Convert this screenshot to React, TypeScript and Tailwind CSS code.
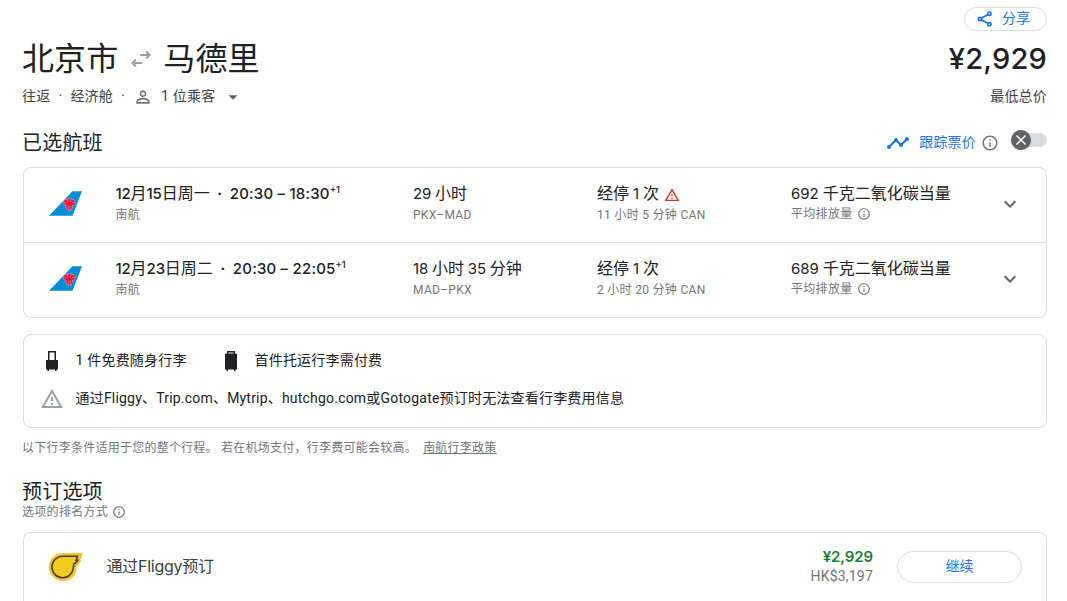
const latin = "font-['Inter','Noto_Sans_CJK_SC',sans-serif]";

type Leg = {
  date: string;
  times: string;
  duration: string;
  route: string;
  warn: boolean;
  layover: string;
  emissions: string;
};

const legs: Leg[] = [
  {
    date: "12月15日周一",
    times: "20:30 – 18:30",
    duration: "29 小时",
    route: "PKX–MAD",
    warn: true,
    layover: "11 小时 5 分钟 CAN",
    emissions: "692 千克二氧化碳当量",
  },
  {
    date: "12月23日周二",
    times: "20:30 – 22:05",
    duration: "18 小时 35 分钟",
    route: "MAD–PKX",
    warn: false,
    layover: "2 小时 20 分钟 CAN",
    emissions: "689 千克二氧化碳当量",
  },
];

// Sets the digits of a mixed string in the display face
const Mixed = ({ text, strong }: { text: string; strong?: boolean }) => (
  <>
    {text.split(/(\d+)/).map((part, i) =>
      /\d/.test(part) ? (
        <span
          key={i}
          className={`${latin} text-[15px] ${
            strong ? "font-medium tracking-[-.2px]" : ""
          }`}
        >
          {part}
        </span>
      ) : (
        part
      )
    )}
  </>
);

const InfoIcon = ({ className }: { className: string }) => (
  <svg viewBox="0 0 24 24" fill="currentColor" className={className}>
    <path d="M11 7h2v2h-2zm0 4h2v6h-2zm1-9C6.48 2 2 6.48 2 12s4.48 10 10 10 10-4.48 10-10S17.52 2 12 2zm0 18c-4.41 0-8-3.59-8-8s3.59-8 8-8 8 3.59 8 8-3.59 8-8 8z" />
  </svg>
);

const WarningIcon = ({ className }: { className: string }) => (
  <svg viewBox="0 0 24 24" fill="currentColor" className={className}>
    <path d="M12 5.99L19.53 19H4.47L12 5.99M12 2L1 21h22L12 2zm1 14h-2v2h2v-2zm0-6h-2v4h2v-4z" />
  </svg>
);

const AirlineLogo = () => (
  <svg viewBox="0 0 35 35" className="size-[35px]">
    <path d="M24.500 5.300H34L24.500 29.700H1z" fill="#008fd5" />
    <path
      d="M15.500 16c.2-2 1.500-2.800 3-2.500.6-1.500 4.900-1.500 5.500 0 1.500-.3 2.800.5 3 2.500.1 2-1 3.300-2.500 3.200.3 2.900-.6 5.300-3.250 5.300s-3.550-2.400-3.250-5.300c-1.500.1-2.600-1.200-2.500-3.200z"
      fill="#e8173f"
      stroke="#f0b4c2"
      strokeWidth=".5"
    />
    <path
      d="M19.800 13v3M22.700 13v3M16.500 16.500h2M24 16.500h2M20.300 19.500v4.500M22.300 19.500v4.500"
      stroke="#f3a7b6"
      strokeWidth=".5"
    />
  </svg>
);

const FlightRow = ({ leg }: { leg: Leg }) => (
  <div className="flex h-[75px] border-t border-[#dadce0] pl-6 first:h-[74px] first:border-t-0">
    <div className="w-[67.500px] shrink-0 pt-[18px]">
      <AirlineLogo />
    </div>
    <div className="w-[297.500px] shrink-0 pt-3.5">
      <div className="flex h-6 items-center whitespace-pre text-base">
        <span>
          <Mixed text={leg.date} strong />
        </span>
        <span className="w-5 text-center font-bold">·</span>
        <span className={`${latin} text-[15px] font-medium tracking-[.2px]`}>
          {leg.times}
        </span>
        <span className={`${latin} -mt-2 text-[9.500px] font-medium`}>+1</span>
      </div>
      <div className="pt-px text-xs leading-4 tracking-[.2px] text-[#70757a]">
        南航
      </div>
    </div>
    <div className="w-[184px] shrink-0 pt-3.5">
      <div className="text-base leading-6 tracking-[-.1px]">
        <Mixed text={leg.duration} />
      </div>
      <div className="pt-px text-xs leading-4 tracking-[.3px] text-[#70757a]">
        {leg.route}
      </div>
    </div>
    <div className="w-[194px] shrink-0 pt-3.5">
      <div className="flex h-6 items-center text-base">
        <span>
          <Mixed text="经停 1 次" />
        </span>
        {leg.warn && (
          <WarningIcon className="ml-[5px] mt-0.5 size-4 text-[#d93025]" />
        )}
      </div>
      <div className="pt-px text-xs leading-4 tracking-[.3px] text-[#70757a]">
        {leg.layover}
      </div>
    </div>
    <div className="grow pt-3.5">
      <div className="text-base leading-6">
        <Mixed text={leg.emissions} />
      </div>
      <div className="flex h-4 items-center text-xs tracking-[.3px] text-[#70757a]">
        平均排放量
        <InfoIcon className="ml-1 size-3.5" />
      </div>
    </div>
    <div className="w-12 shrink-0 pt-6">
      <svg viewBox="0 0 24 24" fill="#5f6368" className="size-6">
        <path d="M7.410 8.590L12 13.170l4.590-4.580L18 10l-6 6-6-6 1.410-1.410z" />
      </svg>
    </div>
  </div>
);

const App = () => {
  return (
    <main className="h-[601px] overflow-hidden bg-white pl-[23px] pr-5 font-['Roboto','Noto_Sans_CJK_SC',sans-serif] text-sm tracking-[.2px] text-[#202124]">
      <div className="flex h-[31px] justify-end pt-[7px]">
        <button className="flex h-6 w-[83px] items-center rounded-full border border-[#dadce0] pb-0.5 pl-3 text-[#1a73e8]">
          <svg
            viewBox="0 0 24 24"
            className="mr-[9px] mt-0.5 size-4"
            fill="none"
            stroke="currentColor"
            strokeWidth="2.500"
          >
            <path d="M7 10.500l9-5M7 13.500l9 5" />
            <circle cx="4.500" cy="12" r="2.500" />
            <circle cx="18.500" cy="4" r="2.500" />
            <circle cx="18.500" cy="20" r="2.500" />
          </svg>
          分享
        </button>
      </div>

      <header className="flex h-[94px] justify-between">
        <div>
          <h1 className="-ml-px flex h-14 items-center pt-0.5 text-[32px] tracking-[.1px]">
            北京市
            <svg
              viewBox="0 0 24 24"
              fill="#9aa0a6"
              className="ml-[11px] mr-2.5 -mt-0.5 size-6"
            >
              <path d="M6.140 11.860l-4.140 4.140 4.140 4.140 1.420-1.420L5.830 17H13v-2H5.830l1.730-1.720zM22 8l-4.140-4.140-1.420 1.420L18.170 7H11v2h7.170l-1.730 1.720 1.420 1.420z" />
            </svg>
            马德里
          </h1>
          <div className="-ml-px -mt-px flex h-5 items-center text-[#3c4043]">
            往返<span className="w-5 text-center">·</span>经济舱
            <span className="w-5 text-center">·</span>
            <svg
              viewBox="0 0 24 24"
              fill="#70757a"
              className="mt-0.5 size-5"
            >
              <path d="M12 5.900a2.100 2.100 0 110 4.200 2.100 2.100 0 010-4.200m0 9c2.970 0 6.100 1.460 6.100 2.100v1.100H5.900V17c0-.64 3.130-2.100 6.100-2.100M12 4C9.790 4 8 5.790 8 8s1.790 4 4 4 4-1.790 4-4-1.790-4-4-4zm0 9c-2.670 0-8 1.340-8 4v3h16v-3c0-2.660-5.330-4-8-4z" />
            </svg>
            <span className="ml-2">1 位乘客</span>
            <svg
              viewBox="0 0 24 24"
              fill="#5f6368"
              className="ml-[9px] mt-0.5 size-[18px]"
            >
              <path d="M6 9.500l6 6 6-6z" />
            </svg>
          </div>
        </div>
        <div className="text-right">
          <div
            className={`${latin} h-14 text-[29px] font-medium leading-[56px]`}
          >
            ¥2,929
          </div>
          <div className="-mt-px leading-5 text-[#3c4043]">最低总价</div>
        </div>
      </header>

      <section>
        <div className="flex h-[42px] items-start justify-between">
          <h2 className="-ml-px pt-1 text-xl leading-7">已选航班</h2>
          <div className="flex items-center pt-1 text-[#1a73e8]">
            <svg
              viewBox="0 0 24 24"
              fill="currentColor"
              className="mt-0.5 size-6"
            >
              <path d="M23 8c0 1.100-.9 2-2 2a1.700 1.700 0 01-.510-.070l-3.560 3.550c.050.160.070.340.070.520 0 1.100-.9 2-2 2s-2-.9-2-2c0-.180.020-.360.070-.520l-2.550-2.550c-.160.050-.340.070-.520.070s-.360-.020-.520-.070l-4.550 4.560c.050.160.070.330.070.510 0 1.100-.9 2-2 2s-2-.9-2-2 .9-2 2-2c.180 0 .350.020.510.070l4.560-4.550C8.020 9.360 8 9.180 8 9c0-1.100.9-2 2-2s2 .9 2 2c0 .180-.020.360-.070.520l2.550 2.550c.160-.050.340-.070.520-.070s.360.020.520.070l3.550-3.560A1.700 1.700 0 0119 8c0-1.100.9-2 2-2s2 .9 2 2z" />
            </svg>
            <span className="ml-[9px]">跟踪票价</span>
            <InfoIcon className="ml-[5px] mt-0.5 size-[18px] text-[#70757a]" />
            <span className="-mt-1 ml-3 flex h-3.5 w-9 items-center rounded-full bg-[#dadce0]">
              <span className="flex size-5 items-center justify-center rounded-full bg-[#5f6368] shadow">
                <svg
                  viewBox="0 0 12 12"
                  className="size-3"
                  stroke="white"
                  strokeWidth="1.500"
                >
                  <path d="M1.500 1.500l9 9M10.500 1.500l-9 9" />
                </svg>
              </span>
            </span>
          </div>
        </div>
        <div className="h-[151px] rounded-lg border border-[#dadce0] tracking-normal">
          {legs.map((leg) => (
            <FlightRow key={leg.route} leg={leg} />
          ))}
        </div>
      </section>

      <section className="mt-4">
        <div className="h-[94px] rounded-lg border border-[#dadce0] pl-4 pt-[15px]">
          <div className="flex h-5 items-center">
            <svg viewBox="0 0 24 24" className="mt-0.5 size-6" fill="#202124">
              <path
                d="M8 2h8v9h2v9.500h-1.500V22H15v-1.500H9V22H7.500v-1.500H6V11h2zm1.500 1.500V11h5V3.500z"
                fillRule="evenodd"
              />
            </svg>
            <span className="ml-[11.500px] w-[143.500px]">1 件免费随身行李</span>
            <svg viewBox="0 0 24 24" className="mt-0.5 size-6" fill="#202124">
              <path
                d="M8 2h8v2.500h1q1 0 1 1v15h-1.500V22H15v-1.500H9V22H7.500v-1.500H6v-15q0-1 1-1h1zm1.500 1.500v1h5v-1z"
                fillRule="evenodd"
              />
            </svg>
            <span className="ml-[11.500px]">首件托运行李需付费</span>
          </div>
          <div className="mt-[18px] flex h-5 items-center">
            <WarningIcon className="mt-0.5 size-6 text-[#9aa0a6]" />
            <span className="ml-[11.500px]">
              通过Fliggy、Trip.com、Mytrip、hutchgo.com或Gotogate预订时无法查看行李费用信息
            </span>
          </div>
        </div>
        <p className="-ml-px mt-3 text-xs leading-4 tracking-[.24px] text-[#70757a]">
          以下行李条件适用于您的整个行程。 若在机场支付，行李费可能会较高。{" "}
          <a className="ml-[3px] underline">南航行李政策</a>
        </p>
      </section>

      <section className="mt-[23px]">
        <h2 className="-ml-px text-xl leading-[26px]">预订选项</h2>
        <div className="-ml-px -mt-px flex h-4 items-center text-xs tracking-[.3px] text-[#70757a]">
          选项的排名方式
          <InfoIcon className="ml-1 size-3.5" />
        </div>
        <div className="mt-3 flex h-[90px] rounded-t-lg border border-b-0 border-[#dadce0] pl-6 pt-[18px] tracking-normal">
          <svg viewBox="0 0 36 32" className="h-8 w-9">
            <path
              d="M15 2h19.500l-1.200 6h-1l.7 2-4.500 6C29 24.500 23 30 15.500 30 7.500 30 1 24 1 16S7 2 15 2z"
              fill="#ffc02e"
            />
            <path
              d="M14.500 5.200h15l-1.300 4h1.600l-2.600 3-1.200.2c-.1 1.300-.3 2.300-.6 3.800C25 22.300 20.500 26.700 14.800 26.700A10.750 10.750 0 0114.500 5.200z"
              fill="#f2cc1c"
              stroke="#3f3e30"
              strokeWidth="1.500"
            />
          </svg>
          <span
            className={`${latin} ml-[22.500px] pt-[3px] text-base leading-6 tracking-[-.25px] text-[#3c4043]`}
          >
            通过Fliggy预订
          </span>
          <div className="ml-auto text-right">
            <div
              className={`${latin} -mt-1 text-[15px] font-semibold leading-5 tracking-[-.1px] text-[#188038]`}
            >
              ¥2,929
            </div>
            <div className="-mt-px leading-5 tracking-[.2px] text-[#70757a]">
              HK$3,197
            </div>
          </div>
          <button className="ml-6 mr-6 h-8 w-[125px] rounded-full border border-[#dadce0] pb-0.5 text-[#1a73e8]">
            继续
          </button>
        </div>
      </section>
    </main>
  );
};

export default App;
